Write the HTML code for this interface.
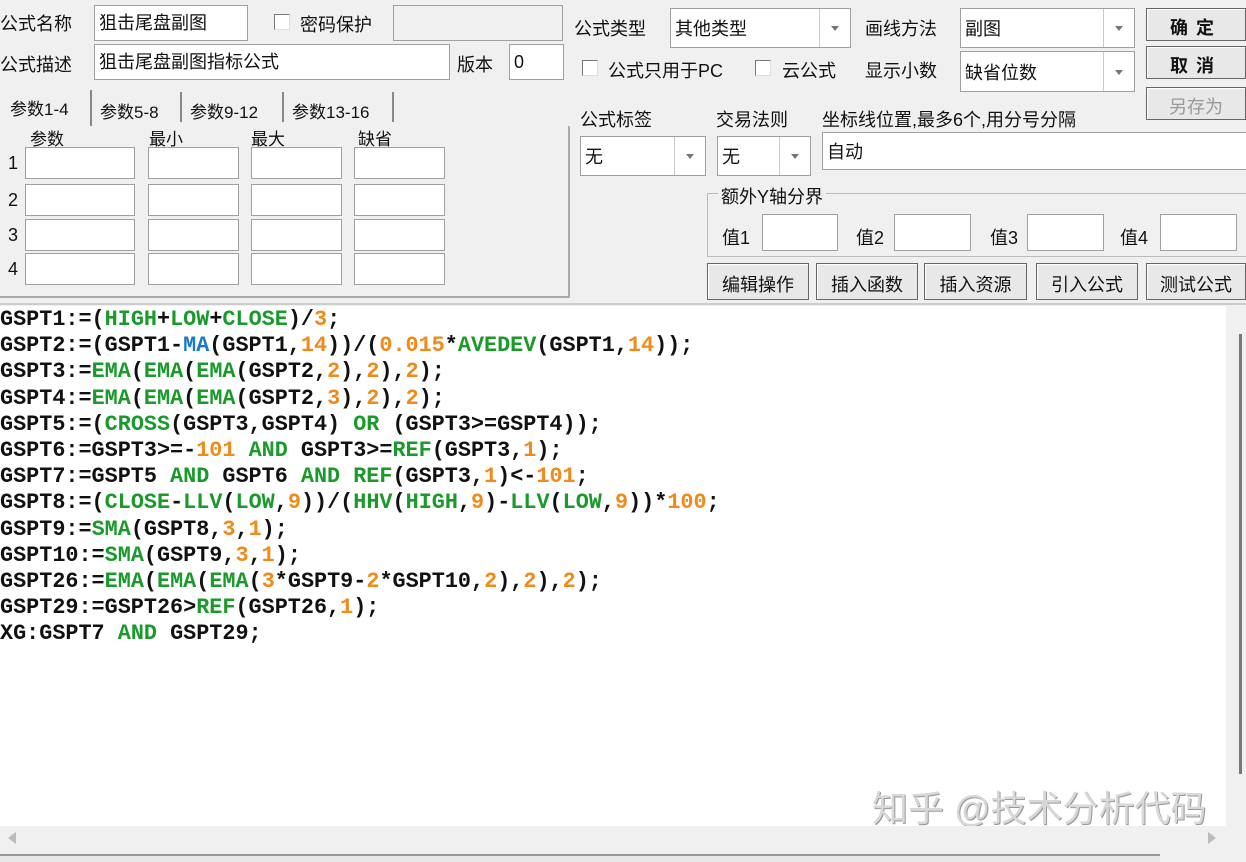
<!DOCTYPE html><html><head><meta charset="utf-8"><style>
body{margin:0;width:1246px;height:860px;background:#f0f0f0;position:relative;overflow:hidden;font-family:"Liberation Sans","Noto Sans CJK SC",sans-serif;font-size:18px;color:#111}
.a{position:absolute;white-space:nowrap}
.in{position:absolute;background:#fff;border:1px solid #a0a0a0;box-sizing:border-box;padding-left:4px;font-size:18px;line-height:1}
.cb{position:absolute;width:14px;height:14px;background:#fff;border:1px solid #777;border-right-color:#ddd;border-bottom-color:#ddd}
.dd{position:absolute;top:0;right:0;width:30px;height:100%;border-left:1px solid #ccc}
.dd:after{content:"";position:absolute;left:11px;top:45%;border:4px solid transparent;border-top:5px solid #777}
.bt{position:absolute;background:#e8e8e8;border:1px solid #666;box-sizing:border-box;text-align:center;font-size:18px;box-shadow:inset 1px 1px #fff}
.code{position:absolute;left:0;top:306px;width:1226px;height:520px;background:#fff;font-family:"Liberation Mono",monospace;font-weight:bold;font-size:21.8px;line-height:26.2px;padding-top:1px}
.g{color:#1a9a2a}.o{color:#f08a1a}.b{color:#1a7ac8}
.t{font-size:17px}
</style></head><body>
<div class="a" style="left:0;top:10px">公式名称</div>
<div class="in" style="left:94px;top:5px;width:154px;height:36px;padding-top:8px">狙击尾盘副图</div>
<div class="cb" style="left:274px;top:14px"></div>
<div class="a" style="left:300px;top:11px">密码保护</div>
<div class="in" style="left:393px;top:5px;width:170px;height:36px;background:#f0f0f0"></div>
<div class="a" style="left:0;top:51px">公式描述</div>
<div class="in" style="left:94px;top:44px;width:356px;height:36px;padding-top:8px">狙击尾盘副图指标公式</div>
<div class="a" style="left:457px;top:51px">版本</div>
<div class="in" style="left:509px;top:44px;width:55px;height:36px;padding-top:8px">0</div>
<!-- tabs -->
<div class="a t" style="left:10px;top:95px">参数1-4</div>
<div class="a" style="left:90px;top:90px;height:36px;border-left:2px solid #888"></div>
<div class="a t" style="left:100px;top:98px">参数5-8</div>
<div class="a" style="left:180px;top:92px;height:30px;border-left:2px solid #888"></div>
<div class="a t" style="left:190px;top:98px">参数9-12</div>
<div class="a" style="left:282px;top:92px;height:30px;border-left:2px solid #888"></div>
<div class="a t" style="left:292px;top:98px">参数13-16</div>
<div class="a" style="left:392px;top:92px;height:30px;border-left:2px solid #888"></div>
<div class="a" style="left:0;top:126px;width:568px;height:170px;border-right:2px solid #aaa;border-bottom:2px solid #aaa"></div>
<div class="a t" style="left:30px;top:125px">参数</div><div class="a t" style="left:149px;top:125px">最小</div><div class="a t" style="left:251px;top:125px">最大</div><div class="a t" style="left:358px;top:125px">缺省</div>
<div class="a" style="left:8px;top:153px">1</div><div class="a" style="left:8px;top:190px">2</div><div class="a" style="left:8px;top:225px">3</div><div class="a" style="left:8px;top:259px">4</div>
<div class="in" style="left:25px;top:147px;width:110px;height:32px"></div><div class="in" style="left:148px;top:147px;width:91px;height:32px"></div><div class="in" style="left:251px;top:147px;width:91px;height:32px"></div><div class="in" style="left:354px;top:147px;width:91px;height:32px"></div>
<div class="in" style="left:25px;top:184px;width:110px;height:32px"></div><div class="in" style="left:148px;top:184px;width:91px;height:32px"></div><div class="in" style="left:251px;top:184px;width:91px;height:32px"></div><div class="in" style="left:354px;top:184px;width:91px;height:32px"></div>
<div class="in" style="left:25px;top:219px;width:110px;height:32px"></div><div class="in" style="left:148px;top:219px;width:91px;height:32px"></div><div class="in" style="left:251px;top:219px;width:91px;height:32px"></div><div class="in" style="left:354px;top:219px;width:91px;height:32px"></div>
<div class="in" style="left:25px;top:253px;width:110px;height:32px"></div><div class="in" style="left:148px;top:253px;width:91px;height:32px"></div><div class="in" style="left:251px;top:253px;width:91px;height:32px"></div><div class="in" style="left:354px;top:253px;width:91px;height:32px"></div>
<!-- right side -->
<div class="a" style="left:574px;top:15px">公式类型</div>
<div class="in" style="left:670px;top:8px;width:181px;height:40px;padding-top:11px">其他类型<div class="dd"></div></div>
<div class="a" style="left:865px;top:15px">画线方法</div>
<div class="in" style="left:960px;top:8px;width:175px;height:40px;padding-top:11px">副图<div class="dd"></div></div>
<div class="cb" style="left:582px;top:60px"></div><div class="a" style="left:608px;top:57px">公式只用于PC</div>
<div class="cb" style="left:755px;top:60px"></div><div class="a" style="left:782px;top:57px">云公式</div>
<div class="a" style="left:865px;top:57px">显示小数</div>
<div class="in" style="left:960px;top:51px;width:175px;height:41px;padding-top:12px">缺省位数<div class="dd"></div></div>
<div class="bt" style="left:1146px;top:8px;width:100px;height:33px;padding-top:5px;font-weight:bold;letter-spacing:8px">确定</div>
<div class="bt" style="left:1146px;top:46px;width:100px;height:33px;padding-top:5px;font-weight:bold;letter-spacing:8px">取消</div>
<div class="bt" style="left:1146px;top:87px;width:100px;height:33px;padding-top:5px;color:#999">另存为</div>
<div class="a" style="left:580px;top:106px">公式标签</div>
<div class="a" style="left:716px;top:106px">交易法则</div>
<div class="a" style="left:822px;top:106px">坐标线位置,最多6个,用分号分隔</div>
<div class="in" style="left:580px;top:136px;width:126px;height:40px;padding-top:11px">无<div class="dd"></div></div>
<div class="in" style="left:717px;top:136px;width:94px;height:40px;padding-top:11px">无<div class="dd"></div></div>
<div class="in" style="left:822px;top:132px;width:430px;height:38px;padding-top:10px">自动</div>
<div class="a" style="left:707px;top:193px;width:545px;height:62px;border:1px solid #bbb;border-right:none"></div>
<div class="a" style="left:718px;top:183px;background:#f0f0f0;padding:0 3px">额外Y轴分界</div>
<div class="a" style="left:722px;top:224px">值1</div><div class="in" style="left:762px;top:214px;width:76px;height:37px"></div>
<div class="a" style="left:856px;top:224px">值2</div><div class="in" style="left:894px;top:214px;width:77px;height:37px"></div>
<div class="a" style="left:990px;top:224px">值3</div><div class="in" style="left:1027px;top:214px;width:77px;height:37px"></div>
<div class="a" style="left:1120px;top:224px">值4</div><div class="in" style="left:1160px;top:214px;width:77px;height:37px"></div>
<div class="bt" style="left:707px;top:263px;width:102px;height:37px;padding-top:7px">编辑操作</div>
<div class="bt" style="left:816px;top:263px;width:102px;height:37px;padding-top:7px">插入函数</div>
<div class="bt" style="left:924px;top:263px;width:103px;height:37px;padding-top:7px">插入资源</div>
<div class="bt" style="left:1036px;top:263px;width:102px;height:37px;padding-top:7px">引入公式</div>
<div class="bt" style="left:1146px;top:263px;width:100px;height:37px;padding-top:7px">测试公式</div>
<div class="a" style="left:0;top:303px;width:1246px;border-top:2px solid #ccc"></div>
<div class="code">
<div>GSPT1:=(<span class="g">HIGH</span>+<span class="g">LOW</span>+<span class="g">CLOSE</span>)/<span class="o">3</span>;</div>
<div>GSPT2:=(GSPT1-<span class="b">MA</span>(GSPT1,<span class="o">14</span>))/(<span class="o">0.015</span>*<span class="g">AVEDEV</span>(GSPT1,<span class="o">14</span>));</div>
<div>GSPT3:=<span class="g">EMA</span>(<span class="g">EMA</span>(<span class="g">EMA</span>(GSPT2,<span class="o">2</span>),<span class="o">2</span>),<span class="o">2</span>);</div>
<div>GSPT4:=<span class="g">EMA</span>(<span class="g">EMA</span>(<span class="g">EMA</span>(GSPT2,<span class="o">3</span>),<span class="o">2</span>),<span class="o">2</span>);</div>
<div>GSPT5:=(<span class="g">CROSS</span>(GSPT3,GSPT4) <span class="g">OR</span> (GSPT3&gt;=GSPT4));</div>
<div>GSPT6:=GSPT3&gt;=-<span class="o">101</span> <span class="g">AND</span> GSPT3&gt;=<span class="g">REF</span>(GSPT3,<span class="o">1</span>);</div>
<div>GSPT7:=GSPT5 <span class="g">AND</span> GSPT6 <span class="g">AND</span> <span class="g">REF</span>(GSPT3,<span class="o">1</span>)&lt;-<span class="o">101</span>;</div>
<div>GSPT8:=(<span class="g">CLOSE</span>-<span class="g">LLV</span>(<span class="g">LOW</span>,<span class="o">9</span>))/(<span class="g">HHV</span>(<span class="g">HIGH</span>,<span class="o">9</span>)-<span class="g">LLV</span>(<span class="g">LOW</span>,<span class="o">9</span>))*<span class="o">100</span>;</div>
<div>GSPT9:=<span class="g">SMA</span>(GSPT8,<span class="o">3</span>,<span class="o">1</span>);</div>
<div>GSPT10:=<span class="g">SMA</span>(GSPT9,<span class="o">3</span>,<span class="o">1</span>);</div>
<div>GSPT26:=<span class="g">EMA</span>(<span class="g">EMA</span>(<span class="g">EMA</span>(<span class="o">3</span>*GSPT9-<span class="o">2</span>*GSPT10,<span class="o">2</span>),<span class="o">2</span>),<span class="o">2</span>);</div>
<div>GSPT29:=GSPT26&gt;<span class="g">REF</span>(GSPT26,<span class="o">1</span>);</div>
<div>XG:GSPT7 <span class="g">AND</span> GSPT29;</div>
</div>
<div class="a" style="left:872px;top:780px;font-size:36px;color:#d8d8d8;text-shadow:1px 1px #999">知乎 @技术分析代码</div>
<div class="a" style="left:1226px;top:306px;width:20px;height:520px;background:#f0f0f0"></div>
<div class="a" style="left:1239px;top:334px;width:3px;height:440px;background:#777"></div>
<div class="a" style="left:0;top:826px;width:1246px;height:26px;background:#f0f0f0"></div>
<div class="a" style="left:8px;top:832px;border:6px solid transparent;border-right:8px solid #bbb;border-left:none"></div>
<div class="a" style="left:1208px;top:832px;border:6px solid transparent;border-left:8px solid #bbb;border-right:none"></div>
<div class="a" style="left:0;top:854px;width:1160px;height:6px;border-top:2px solid #999;background:#e8e8e8"></div>
</body></html>
